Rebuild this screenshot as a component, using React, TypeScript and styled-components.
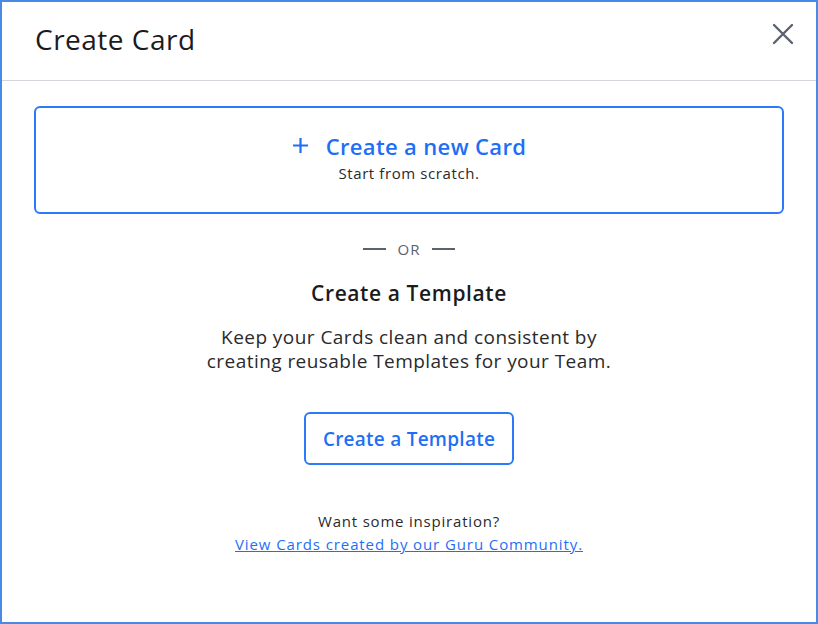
import React from 'react';
import styled, { createGlobalStyle } from 'styled-components';

const GlobalStyle = createGlobalStyle`
  html, body {
    margin: 0;
    padding: 0;
    background: #ffffff;
  }
  body {
    font-family: "Open Sans", Lato, Arial, sans-serif;
  }
`;

const blue = '#1f6ff5';

const Modal = styled.div`
  width: 818px;
  height: 624px;
  box-sizing: border-box;
  border: 2px solid #4a89e8;
  background: #ffffff;
  display: flex;
  flex-direction: column;
`;

const Header = styled.header`
  height: 79px;
  box-sizing: border-box;
  padding: 20px 19px 0 33px;
  display: flex;
  align-items: flex-start;
  justify-content: space-between;
  border-bottom: 1px solid #d3d6db;
`;

const Title = styled.h1`
  margin: 0;
  font-size: 28px;
  line-height: 34px;
  font-weight: 500;
  letter-spacing: 0.5px;
  color: #1b1b1d;
`;

const CloseButton = styled.button`
  width: 28px;
  height: 28px;
  margin-top: -2px;
  padding: 0;
  border: none;
  background: none;
  cursor: pointer;
  display: flex;
  align-items: center;
  justify-content: center;
`;

const Body = styled.div`
  padding: 25px 32px 0;
  display: flex;
  flex-direction: column;
  align-items: center;
`;

const NewCardBox = styled.button`
  width: 100%;
  height: 108px;
  box-sizing: border-box;
  border: 2px solid #2b7af7;
  border-radius: 6px;
  background: #ffffff;
  cursor: pointer;
  display: flex;
  flex-direction: column;
  align-items: center;
  justify-content: center;
  gap: 5px;
  font-family: inherit;
  padding: 0 0 6px;
`;

const NewCardTitle = styled.span`
  display: flex;
  align-items: center;
  gap: 17px;
  font-size: 22px;
  line-height: 26px;
  font-weight: 600;
  letter-spacing: 0.35px;
  color: ${blue};
`;

const Small = styled.span`
  font-size: 15px;
  line-height: 18px;
  letter-spacing: 0.6px;
  color: #2a2a2c;
`;

const Divider = styled.div`
  margin-top: 26px;
  display: flex;
  align-items: center;
  gap: 12px;
  font-size: 15px;
  line-height: 18px;
  letter-spacing: 1px;
  color: #5b626c;

  &::before,
  &::after {
    content: '';
    width: 23px;
    height: 2px;
    background: #5b626c;
  }
`;

const SectionTitle = styled.h2`
  margin: 22px 0 0;
  font-size: 21px;
  line-height: 26px;
  font-weight: 600;
  letter-spacing: 0.6px;
  color: #1b1b1d;
`;

const Text = styled.p`
  margin: 19px 0 0;
  font-size: 19px;
  line-height: 24px;
  letter-spacing: 0.45px;
  text-align: center;
  color: #2a2a2c;
`;

const OutlineButton = styled.button`
  margin-top: 39px;
  width: 210px;
  height: 53px;
  box-sizing: border-box;
  border: 2px solid #2b7af7;
  border-radius: 6px;
  background: #ffffff;
  font-family: inherit;
  font-size: 19px;
  font-weight: 600;
  letter-spacing: 0.25px;
  color: ${blue};
  cursor: pointer;
`;

const Footer = styled.div`
  margin-top: 45px;
  display: flex;
  flex-direction: column;
  align-items: center;
  font-size: 15px;
  line-height: 23px;
  letter-spacing: 0.8px;
  color: #2a2a2c;
`;

const Link = styled.a`
  color: ${blue};
  letter-spacing: 0.9px;
  text-decoration: underline;
  cursor: pointer;
`;

const App: React.FC = () => (
  <>
    <GlobalStyle />
    <Modal>
      <Header>
        <Title>Create Card</Title>
        <CloseButton aria-label="Close">
          <svg width="22" height="22" viewBox="0 0 22 22">
            <path d="M2 2 L20 20 M20 2 L2 20" stroke="#5b626e" strokeWidth="2.4" strokeLinecap="round" />
          </svg>
        </CloseButton>
      </Header>
      <Body>
        <NewCardBox>
          <NewCardTitle>
            <svg width="17" height="17" viewBox="0 0 17 17">
              <path d="M8.5 1 V16 M1 8.5 H16" stroke={blue} strokeWidth="2.2" />
            </svg>
            Create a new Card
          </NewCardTitle>
          <Small>Start from scratch.</Small>
        </NewCardBox>
        <Divider>OR</Divider>
        <SectionTitle>Create a Template</SectionTitle>
        <Text>
          Keep your Cards clean and consistent by
          <br />
          creating reusable Templates for your Team.
        </Text>
        <OutlineButton>Create a Template</OutlineButton>
        <Footer>
          <span>Want some inspiration?</span>
          <Link>View Cards created by our Guru Community.</Link>
        </Footer>
      </Body>
    </Modal>
  </>
);

export default App;
